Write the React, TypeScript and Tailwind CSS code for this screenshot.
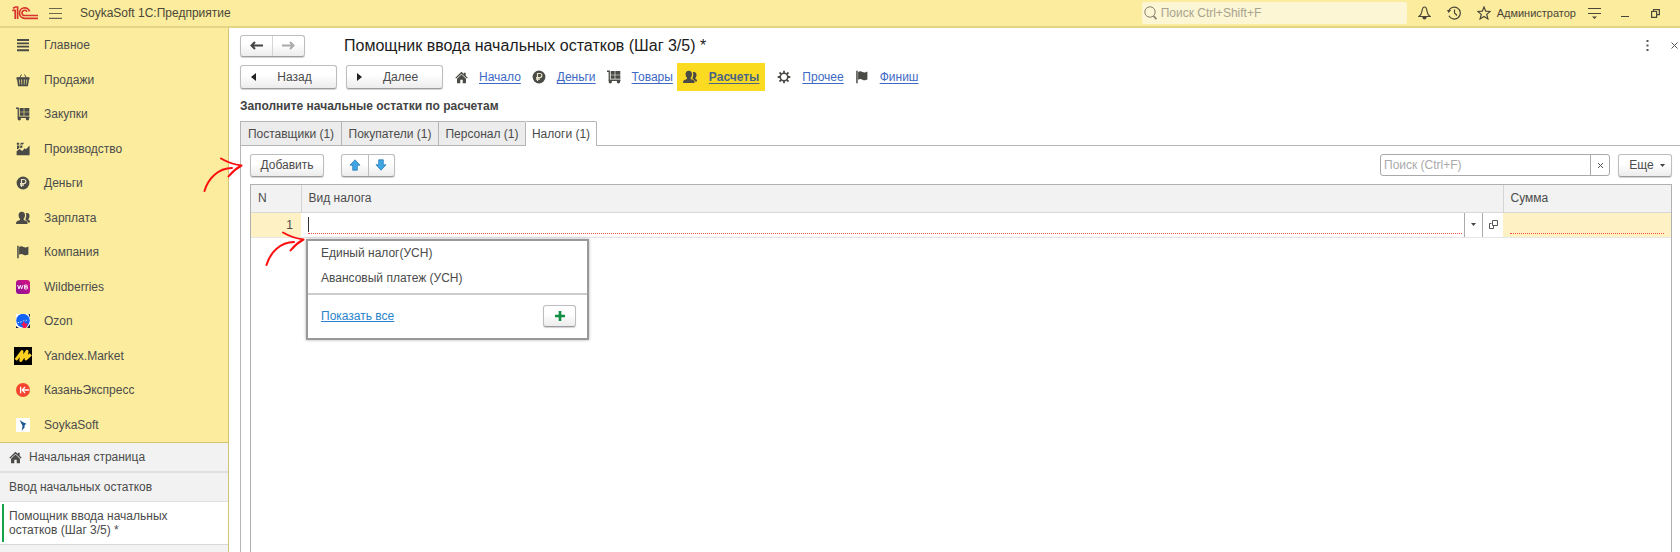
import type { ReactNode } from 'react';

const dark = '#4a4a46';

function ListIcon() {
  return (
    <svg width="14" height="14" viewBox="0 0 14 14" fill={dark} aria-hidden="true">
      <path d="M1 1h12v2H1zM1 4.400h12v1.800H1zM1 7.800h12v1.800H1zM1 11.200h12v2H1z" />
    </svg>
  );
}

function BasketIcon() {
  return (
    <svg width="14" height="14" viewBox="0 0 14 14" fill="none" stroke={dark} aria-hidden="true">
      <path d="M3.500 5L5.500 1.500M10.500 5L8.500 1.500" />
      <path d="M.5 4.200h13v2.300H.5z" fill={dark} stroke="none" />
      <path d="M1.800 6l1 6.500h8.400l1-6.500M4.400 6l.4 6.500M7 6v6.500M9.600 6l-.4 6.500" strokeWidth="1.700" />
    </svg>
  );
}

function CartIcon() {
  return (
    <svg width="14" height="14" viewBox="0 0 14 14" fill={dark} aria-hidden="true">
      <path d="M0 .6h2.900v8.900h10.600V11H1.600V1.900H0zM3.700 1h4v3.700h-4zM8.300 1h5v3.700h-5zM3.700 5.200h4v3.600h-4zM8.300 5.200h5v3.600h-5z" />
      <circle cx="3.300" cy="11.800" r="1.700" />
      <circle cx="11.500" cy="11.800" r="1.700" />
    </svg>
  );
}

function FactoryIcon() {
  return (
    <svg width="14" height="14" viewBox="0 0 14 14" fill={dark} aria-hidden="true">
      <path d="M.6 13.300V9.200l3-2.200 2.600 1.900 2.500-2.600 1.200 1 3.700-3.800v9.800zM1 3.400h2.400v2.500L1 7.600zM4.200 3.400h2.200v2L4.200 6.200zM.8.800h2.400v2H.8zM4 2.400L5 .8h3L7 2.400z" />
    </svg>
  );
}

function RubleIcon() {
  return (
    <svg width="14" height="14" viewBox="0 0 14 14" aria-hidden="true">
      <circle cx="7" cy="7" r="6.400" fill={dark} />
      <path d="M5.500 11V3.500h2.300a2 2 0 0 1 0 4.100H4M4 9.200h4" fill="none" stroke="#e9e4c8" strokeWidth="1.200" />
    </svg>
  );
}

function PeopleIcon() {
  return (
    <svg width="14" height="14" viewBox="0 0 14 14" fill={dark} aria-hidden="true">
      <path d="M5.800.8c2.200 0 3.200 1.400 3.200 3.400 0 1.600-.6 2.800-1.300 3.500v1.300l2.600 1.100c1 .5 1.300 1.300 1.300 2.800H.1c0-1.500.3-2.300 1.300-2.800L4 9V7.700C3.200 7 2.600 5.800 2.600 4.200 2.600 2.200 3.600.8 5.800.8z" />
      <path d="M9.800 2.200c2.400-.6 3.700.6 3.700 2.700 0 1.400-.5 2.300-1.100 2.900v1l.9.500c.6.400.7 1 .7 2.200h-2c-.2-1-.9-1.700-1.900-2.200L9.500 9V7.800c.9-1.700 1-3.900.3-5.600z" />
    </svg>
  );
}

function FlagIcon() {
  return (
    <svg width="14" height="14" viewBox="0 0 14 14" fill={dark} aria-hidden="true">
      <path d="M1.200.8h1.500v12.400H1.200zM3.100 2c1.700-1.300 2.900-.9 4.400-.1s2.800.6 4.900-.4v8c-2 1-3.400 1-4.900.2s-2.700-1.100-4.400 0z" />
    </svg>
  );
}

function HomeIcon() {
  return (
    <svg width="13" height="13" viewBox="0 0 14 14" fill={dark} aria-hidden="true">
      <path d="M7 .9L.3 7.200l1 1L7 2.900l5.700 5.300 1-1L11.500 5V2H9.600v1.300zM7 3.800L2.200 8.300V13.200h3.500V9.300h2.600v3.900h3.500V8.300z" />
    </svg>
  );
}

function GearIcon() {
  return (
    <svg width="14" height="14" viewBox="0 0 14 14" fill="none" stroke={dark} aria-hidden="true">
      <circle cx="7" cy="7" r="3.800" strokeWidth="1.600" />
      <path d="M7 .7v2.400M7 10.900v2.400M.7 7h2.400M10.900 7h2.400M2.500 2.500l1.700 1.700M9.800 9.800l1.700 1.700M2.500 11.500l1.700-1.700M9.800 4.200l1.700-1.700" strokeWidth="1.800" />
    </svg>
  );
}

function WildberriesIcon() {
  return (
    <svg width="14" height="14" viewBox="0 0 14 14" aria-hidden="true">
      <defs>
        <linearGradient id="wb" x1="0" y1="1" x2="1" y2="0">
          <stop offset="0" stopColor="#8a1199" />
          <stop offset="1" stopColor="#d8127f" />
        </linearGradient>
      </defs>
      <rect width="14" height="14" rx="3" fill="url(#wb)" />
      <path d="M1.600 5l1.400 4 1.300-3.800L5.600 9 7 5M8.600 5v4h2a1 1 0 0 0 0-2.100h-2 1.800a.95.95 0 0 0 0-1.900z" fill="none" stroke="#fff" strokeWidth=".9" />
    </svg>
  );
}

function OzonIcon() {
  return (
    <svg width="14" height="14" viewBox="0 0 14 14" aria-hidden="true">
      <path d="M0 0h14v14H0z" fill="#fff" />
      <path d="M12.500 0H14v4zM14 10v4h-3zM0 12l3 2H0z" fill="#1b1d3a" />
      <circle cx="7" cy="6.600" r="6.800" fill="#1263f5" />
      <path d="M4.800 10.300l1.500-.3 1.400-3 1.600 2.500 2.700.3-1.400 1.700.6 1.600-2 .9H6.800l.3-2z" fill="#f5134f" />
      <path d="M1.800 8.800l1.400-.6M4.300 8.200l1.300-.7M7.200 7l1-.5M9.500 7l1.300-.9" stroke="#d8e6ff" strokeWidth="1" />
    </svg>
  );
}

function MarketIcon() {
  return (
    <svg width="18" height="18" viewBox="0 0 18 18" aria-hidden="true">
      <path d="M0 0h18v18H0z" />
      <path d="M1.800 12.800L8 4.600 6.800 13.500 13 4.300l-1 7.600 4.800-4.600" fill="none" stroke="#fbd021" strokeWidth="3" strokeLinejoin="round" />
    </svg>
  );
}

function KazanIcon() {
  return (
    <svg width="14" height="14" viewBox="0 0 14 14" aria-hidden="true">
      <circle cx="7" cy="7" r="7" fill="#f5452f" />
      <path d="M4.600 3.800v6.400M9 4L6.300 7 9 10M6.500 7h6.700" fill="none" stroke="#fff" strokeWidth="1.300" />
    </svg>
  );
}

function BirdIcon() {
  return (
    <svg width="14" height="14" viewBox="0 0 14 14" aria-hidden="true">
      <path d="M0 0h14v14H0z" fill="#fff" />
      <path d="M3.600 2l3.400 2.300 3.400 1.400-1.700 1.300-.2 2.500-2.900 3.200 1-4.600z" fill="#1d5590" />
    </svg>
  );
}

function Logo() {
  return (
    <svg width="26" height="14" viewBox="0 0 26 14" fill="none" stroke="#d8352c" aria-hidden="true">
      <path d="M.3 4.400h2.900V13M1 2.200L3.600 1h2v12" strokeWidth="1.700" />
      <path d="M17.600 5.400A5.200 5.200 0 1 0 12.700 12.300H26" strokeWidth="1.700" />
      <path d="M15 5.800A2.600 2.600 0 1 0 12.700 9.500H26" strokeWidth="1.600" />
    </svg>
  );
}

function PointerArrow({ className }: { className: string }) {
  return (
    <svg className={'pointer-events-none absolute z-20 ' + className} width="40" height="36" viewBox="0 0 40 36" fill="none" stroke="#fb1010" strokeLinecap="round" strokeLinejoin="round" aria-hidden="true">
      <path d="M1.500 34C5 22 15 11 29 11" strokeWidth="2" />
      <path d="M18 1.500C24 5 31 7.500 38.500 8.500 33 11.500 29 15 25.500 19.500" strokeWidth="2" />
    </svg>
  );
}

const sections: { label: string; icon: ReactNode }[] = [
  { label: 'Главное', icon: <ListIcon /> },
  { label: 'Продажи', icon: <BasketIcon /> },
  { label: 'Закупки', icon: <CartIcon /> },
  { label: 'Производство', icon: <FactoryIcon /> },
  { label: 'Деньги', icon: <RubleIcon /> },
  { label: 'Зарплата', icon: <PeopleIcon /> },
  { label: 'Компания', icon: <FlagIcon /> },
  { label: 'Wildberries', icon: <WildberriesIcon /> },
  { label: 'Ozon', icon: <OzonIcon /> },
  { label: 'Yandex.Market', icon: <MarketIcon /> },
  { label: 'КазаньЭкспресс', icon: <KazanIcon /> },
  { label: 'SoykaSoft', icon: <BirdIcon /> },
];

const steps: { label: string; icon: ReactNode; active?: boolean }[] = [
  { label: 'Начало', icon: <HomeIcon /> },
  { label: 'Деньги', icon: <RubleIcon /> },
  { label: 'Товары', icon: <CartIcon /> },
  { label: 'Расчеты', icon: <PeopleIcon />, active: true },
  { label: 'Прочее', icon: <GearIcon /> },
  { label: 'Финиш', icon: <FlagIcon /> },
];

const tabs = [
  { label: 'Поставщики (1)', width: 'w-[101px]' },
  { label: 'Покупатели (1)', width: 'w-[97px]' },
  { label: 'Персонал (1)', width: 'w-[87px]' },
  { label: 'Налоги (1)', width: 'w-[72px]' },
];

const button =
  'flex items-center justify-center rounded-[3px] border border-[#bdbdbd] border-b-[#9c9c9c] bg-linear-to-b from-white from-40% to-[#ececec] shadow-[0_1px_1px_rgba(0,0,0,0.18)]';

function Header() {
  return (
    <header className="flex h-7 shrink-0 items-center border-b-2 border-[#e3d584] bg-[#fbec9e] pl-3 text-[#4b4738]">
      <Logo />
      <button type="button" aria-label="Меню" className="ml-[11px]">
        <svg width="13" height="12" viewBox="0 0 13 12" stroke="#6b6650" strokeWidth="1.200" aria-hidden="true">
          <path d="M0 1.500h13M0 6.500h13M0 11.400h13" />
        </svg>
      </button>
      <span className="ml-[18px] text-xs">SoykaSoft 1С:Предприятие</span>
      <label className="ml-auto flex h-[22px] w-[265px] items-center gap-1 rounded-[2px] bg-[#fdf6d4] pl-0.5">
        <svg width="13" height="14" viewBox="0 0 13 14" fill="none" stroke="#858070" aria-hidden="true">
          <circle cx="6" cy="6" r="5.200" />
          <path d="M9.500 10l3 3.200" strokeWidth="1.800" />
        </svg>
        <input type="search" aria-label="Поиск" placeholder="Поиск Ctrl+Shift+F" className="min-w-0 flex-1 bg-transparent text-xs outline-none placeholder:text-[#a8a38f]" />
      </label>
      <button type="button" aria-label="Уведомления" className="ml-[11px]">
        <svg width="13" height="14" viewBox="0 0 13 14" fill="none" stroke="#4b4738" strokeWidth="1.200" aria-hidden="true">
          <path d="M1 10.500c2-1.500 2.600-3 2.900-5C4.200 3 5 1 6.500 1s2.300 2 2.600 4.500c.3 2 .9 3.500 2.900 5z" />
          <path d="M4.300 11h4.400c0 1.500-.9 2.400-2.200 2.400S4.300 12.500 4.300 11z" fill="#4b4738" stroke="none" />
        </svg>
      </button>
      <button type="button" aria-label="История" className="ml-4">
        <svg width="14" height="14" viewBox="0 0 14 14" fill="none" stroke="#4b4738" strokeWidth="1.200" aria-hidden="true">
          <path d="M1.500 5.500a6 6 0 1 1 .4 4.200M7.500 3.500V7l2.500 2.500" />
          <path d="M0 4h4.200L1.600 7z" fill="#4b4738" stroke="none" />
        </svg>
      </button>
      <button type="button" aria-label="Избранное" className="ml-4">
        <svg width="14" height="14" viewBox="0 0 14 14" fill="none" stroke="#4b4738" strokeWidth="1.200" aria-hidden="true">
          <path d="M7 1l1.700 4.200 4.500.3-3.500 2.900 1.200 4.500L7 10.500l-3.900 2.400 1.200-4.500L.8 5.500l4.500-.3z" />
        </svg>
      </button>
      <span className="ml-1.5 text-[11px]">Администратор</span>
      <button type="button" aria-label="Настройки" className="ml-3">
        <svg width="13" height="13" viewBox="0 0 13 13" stroke="#4b4738" aria-hidden="true">
          <path d="M0 1.500h13M0 6.500h13" />
          <path d="M4 9.500h5L6.500 12z" fill="#4b4738" stroke="none" />
        </svg>
      </button>
      <button type="button" aria-label="Свернуть" className="ml-5">
        <svg width="8" height="10" viewBox="0 0 8 10" stroke="#4b4738" aria-hidden="true">
          <path d="M0 8.500h8" />
        </svg>
      </button>
      <button type="button" aria-label="Развернуть" className="mr-5 ml-[22px]">
        <svg width="9" height="9" viewBox="0 0 9 9" fill="none" stroke="#4b4738" strokeWidth="1.200" aria-hidden="true">
          <path d="M.6 2.500h5v5.900h-5zM2.500 2V.6h5.900v5H6" />
        </svg>
      </button>
    </header>
  );
}

function Sidebar() {
  return (
    <aside className="flex w-[229px] shrink-0 flex-col border-r border-[#d3c471] bg-[#f2f2f2] text-xs text-[#4b4b4b]">
      <nav className="grid h-[415px] shrink-0 grid-rows-12 border-b border-[#d3c471] bg-[#fbec9e]">
        {sections.map((s) => (
          <a key={s.label} href="#" className="flex items-center gap-[11px] pl-[13px]">
            <span className="flex w-5 justify-center">{s.icon}</span>
            {s.label}
          </a>
        ))}
      </nav>
      <a href="#" className="flex h-[30px] shrink-0 items-center gap-[7px] border-b-2 border-[#e0e0e0] pl-[9px]">
        <HomeIcon />
        Начальная страница
      </a>
      <a href="#" className="flex h-[29px] shrink-0 items-center border-b border-[#e0e0e0] pl-[9px]">
        Ввод начальных остатков
      </a>
      <a href="#" className="flex shrink-0 border-b border-[#d8d8d8] bg-white py-0.5 pl-0.5">
        <span className="border-l-2 border-[#15a04a] py-[5px] pr-8 pl-[5px] leading-[14px]">Помощник ввода начальных остатков (Шаг 3/5) *</span>
      </a>
    </aside>
  );
}

function Suggestions() {
  return (
    <div className="absolute top-[26px] left-[5px] z-10 w-[283px] border-2 border-[#999] bg-white shadow-[0_0_3px_rgba(0,0,0,0.3)]">
      <ul className="border-b-2 border-[#ccc] pb-0.5">
        <li className="flex h-[25px] items-center pl-[13px]">Единый налог(УСН)</li>
        <li className="flex h-[25px] items-center pl-[13px]">Авансовый платеж (УСН)</li>
      </ul>
      <div className="flex h-[43px] items-center justify-between pr-[11px] pl-[13px]">
        <a href="#" className="text-[#2a83cc] underline">Показать все</a>
        <button type="button" aria-label="Создать" className={button + ' h-[22px] w-[33px]'}>
          <svg width="10" height="10" viewBox="0 0 10 10" fill="#0f9040" aria-hidden="true">
            <path d="M3.700 0h2.600v3.700H10v2.600H6.300V10H3.700V6.300H0V3.700h3.700z" />
          </svg>
        </button>
      </div>
    </div>
  );
}

function TaxTable() {
  return (
    <div className="mr-2 ml-[9px] flex-1 border border-b-0 border-[#b0b0b0]">
      <table className="w-full table-fixed border-collapse">
        <colgroup>
          <col className="w-[50px]" />
          <col />
          <col className="w-[168px]" />
        </colgroup>
        <thead>
          <tr className="h-[27px] border-b border-[#d8d8d8] bg-[#f2f2f2] text-left">
            <th className="border-r border-[#d5d5d5] pl-[7px] font-normal">N</th>
            <th className="border-r border-[#d5d5d5] pl-[7px] font-normal">Вид налога</th>
            <th className="pl-[7px] font-normal">Сумма</th>
          </tr>
        </thead>
        <tbody>
          <tr className="h-[25px] border-b border-[#e6e6e6]">
            <td className="bg-[#fef1c4] pr-2 text-right">1</td>
            <td className="relative p-0">
              <PointerArrow className="top-[18px] -left-[36px]" />
              <div className="flex h-6 items-stretch">
                <div className="mt-1 mr-0.5 mb-[3px] ml-[7px] flex flex-1 items-center border-b border-dotted border-[#f54b40]">
                  <span className="h-[15px] w-px bg-[#333]" />
                  <input aria-label="Вид налога" className="h-4 w-full bg-transparent outline-none" />
                </div>
                <button type="button" aria-label="Выбрать из списка" className="flex w-[19px] items-center justify-center border-x border-[#aaa]">
                  <svg width="5" height="3" viewBox="0 0 5 3" fill="#444" aria-hidden="true"><path d="M0 0h5L2.500 3z" /></svg>
                </button>
                <button type="button" aria-label="Открыть" className="flex w-5 items-center justify-center">
                  <svg width="9" height="9" viewBox="0 0 9 9" fill="none" stroke="#555" aria-hidden="true">
                    <path d="M3.500.5h5v5h-5zM2.500 3.500h-2v5h4V6" />
                  </svg>
                </button>
              </div>
              <Suggestions />
            </td>
            <td className="bg-[#fef1c4] p-0">
              <div className="mx-[7px] mt-1 mb-[3px] flex h-[17px] border-b border-dotted border-[#f54b40]">
                <input aria-label="Сумма" className="w-full bg-transparent outline-none" />
              </div>
            </td>
          </tr>
        </tbody>
      </table>
    </div>
  );
}

function ArrowGlyph({ flip, color }: { flip?: boolean; color: string }) {
  return (
    <svg width="13" height="9" viewBox="0 0 13 9" fill="none" stroke={color} strokeWidth="2" aria-hidden="true">
      <path d={flip ? 'M0 4.500h11.500M8 1l3.500 3.500L8 8' : 'M13 4.500H1.500M5 1L1.500 4.500 5 8'} />
    </svg>
  );
}

export default function App() {
  return (
    <div className="flex min-h-screen flex-col bg-white font-['Liberation_Sans',Arial,sans-serif] text-xs text-[#4b4b4b]">
      <Header />
      <div className="flex flex-1">
        <Sidebar />
        <main className="flex min-w-0 flex-1 flex-col pl-[11px]">
          <div className="flex h-[35px] items-center">
            <div className={button + ' h-[22px] w-[65px]'}>
              <button type="button" aria-label="Назад" className="flex h-full flex-1 items-center justify-center border-r border-[#d5d5d5]">
                <ArrowGlyph color="#444" />
              </button>
              <button type="button" aria-label="Вперед" className="flex h-full flex-1 items-center justify-center">
                <ArrowGlyph flip color="#aaa" />
              </button>
            </div>
            <h1 className="ml-[39px] text-base text-[#1c1c1c]">Помощник ввода начальных остатков (Шаг 3/5) *</h1>
            <button type="button" aria-label="Еще действия" className="ml-auto">
              <svg width="3" height="11" viewBox="0 0 3 11" fill="#555" aria-hidden="true">
                <path d="M.5 0h2v2h-2zM.5 4.500h2v2h-2zM.5 9h2v2h-2z" />
              </svg>
            </button>
            <button type="button" aria-label="Закрыть" className="mr-0.5 ml-[22px]">
              <svg width="7" height="7" viewBox="0 0 7 7" stroke="#555" aria-hidden="true">
                <path d="M.5.5l6 6M6.500.5l-6 6" />
              </svg>
            </button>
          </div>

          <div className="flex h-7 items-center">
            <button type="button" className={button + ' relative h-6 w-[97px]'}>
              <svg className="absolute left-2.5" width="5" height="8" viewBox="0 0 5 8" fill="#222" aria-hidden="true"><path d="M5 0v8L0 4z" /></svg>
              <span className="ml-3">Назад</span>
            </button>
            <button type="button" className={button + ' relative ml-[9px] h-6 w-[97px]'}>
              <svg className="absolute left-2.5" width="5" height="8" viewBox="0 0 5 8" fill="#222" aria-hidden="true"><path d="M0 0v8l5-4z" /></svg>
              <span className="ml-3">Далее</span>
            </button>
            <nav className="ml-[5px] flex h-full">
              {steps.map((s) => (
                <a key={s.label} href="#" className={s.active ? 'mr-[5px] flex items-center gap-3 bg-[#fbdb21] px-1.5 font-bold text-[#4a6585]' : 'flex items-center gap-[11px] pr-1 pl-[7px] text-[#3d69c4]'}>
                  {s.icon}
                  <span className="underline underline-offset-2">{s.label}</span>
                </a>
              ))}
            </nav>
          </div>

          <h2 className="flex h-[30px] items-center font-bold text-[#444]">Заполните начальные остатки по расчетам</h2>

          <div role="tablist" className="relative z-[1] flex h-[25px]">
            {tabs.map((t, i) => (
              <button
                key={t.label}
                type="button"
                role="tab"
                aria-selected={i === 3}
                className={
                  t.width +
                  ' whitespace-nowrap ' +
                  (i === 3 ? 'rounded-t-[2px] border border-b-0 border-[#b5b5b5] bg-white' : 'border border-r-0 border-[#b5b5b5] bg-[#ececec]')
                }
              >
                {t.label}
              </button>
            ))}
          </div>
          <section className="relative -mt-px flex flex-1 flex-col border-t border-l border-[#b5b5b5]">
            <PointerArrow className="top-[11px] -left-[38px]" />
            <div className="my-[7px] flex h-6 items-center pr-2 pl-[9px]">
              <button type="button" className={button + ' h-[23px] w-[74px]'}>Добавить</button>
              <div className={button + ' ml-[17px] h-[23px] w-[54px]'}>
                <button type="button" aria-label="Вверх" className="flex h-full flex-1 items-center justify-center border-r border-[#bdbdbd]">
                  <svg width="12" height="12" viewBox="0 0 12 12" fill="#3fa6e6" stroke="#2b7cb5" strokeWidth=".8" aria-hidden="true">
                    <path d="M6 .8l5 5.400H8.300v5H3.700v-5H1z" />
                  </svg>
                </button>
                <button type="button" aria-label="Вниз" className="flex h-full flex-1 items-center justify-center">
                  <svg width="12" height="12" viewBox="0 0 12 12" fill="#3fa6e6" stroke="#2b7cb5" strokeWidth=".8" aria-hidden="true">
                    <path d="M6 11.200l5-5.400H8.300v-5H3.700v5H1z" />
                  </svg>
                </button>
              </div>
              <div className="ml-auto flex h-[22px] w-[230px] rounded-[3px] border border-[#a9a9a9]">
                <input type="search" aria-label="Поиск в таблице" placeholder="Поиск (Ctrl+F)" className="min-w-0 flex-1 bg-transparent pl-[3px] outline-none placeholder:text-[#aaa]" />
                <button type="button" aria-label="Очистить" className="flex w-[19px] items-center justify-center border-l border-[#a9a9a9]">
                  <svg width="5" height="5" viewBox="0 0 5 5" stroke="#555" aria-hidden="true"><path d="M0 0l5 5M5 0L0 5" /></svg>
                </button>
              </div>
              <button type="button" className={button + ' ml-2 h-[23px] w-[54px] gap-1.5 pl-1'}>
                Еще
                <svg width="5" height="3" viewBox="0 0 5 3" fill="#444" aria-hidden="true"><path d="M0 0h5L2.500 3z" /></svg>
              </button>
            </div>
            <TaxTable />
          </section>
        </main>
      </div>
    </div>
  );
}
